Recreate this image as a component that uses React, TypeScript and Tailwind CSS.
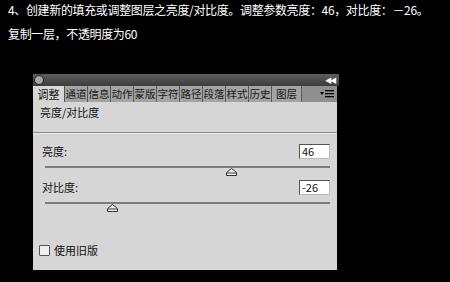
import React from "react";

const cjk = { fontFamily: '"Noto Sans CJK SC", "Noto Sans", sans-serif' };

const tabs = ["通道", "信息", "动作", "蒙版", "字符", "路径", "段落", "样式", "历史"];

function Thumb() {
  return (
    <svg width="11" height="8" viewBox="0 0 11 8" className="block">
      <path d="M5.5 0.5 L10.5 4.5 L10.5 7.5 L0.5 7.5 L0.5 4.5 Z" fill="#f4f4f4" stroke="#333" strokeWidth="1" />
      <line x1="1" y1="5" x2="10" y2="5" stroke="#333" strokeWidth="1" />
    </svg>
  );
}

function SliderRow({ label, value, thumbAt }: { label: string; value: string; thumbAt: number }) {
  return (
    <div className="flex flex-col">
      <div className="flex items-center justify-between h-[15px] pl-[9px] pr-[7px]">
        <span className="text-[11px] leading-none text-[#111]">{label}</span>
        <div className="w-[31px] h-[15px] bg-white border border-t-[#555] border-l-[#555] border-r-[#bbb] border-b-[#bbb] flex items-center pl-[2px] text-[11px] leading-none text-[#111]">
          {value}
        </div>
      </div>
      <div className="relative mt-[7px] ml-[12px] mr-[7px] h-[2px] bg-[#7c7c7c]">
        {/* thumb sits over the track */}
        <div className="absolute top-[2px]" style={{ left: thumbAt }}>
          <Thumb />
        </div>
      </div>
    </div>
  );
}

export default function App() {
  return (
    <div className="w-[450px] h-[282px] bg-black overflow-hidden flex flex-col" style={cjk}>
      {/* caption */}
      <div className="pt-[3px] pl-[8px] text-white text-[12px] leading-[14px] tracking-[-0.35px]">
        <p>4、创建新的填充或调整图层之亮度/对比度。调整参数亮度：46，对比度：－26。</p>
        <p className="mt-[10px]">复制一层，不透明度为60</p>
      </div>

      {/* panel */}
      <div className="ml-[33px] mt-[33px] w-[306px] flex flex-col">
        {/* title bar */}
        <div className="h-[12px] bg-gradient-to-b from-[#5e5e5e] to-[#3c3c3c] flex items-center justify-between px-[1px]">
          <div className="w-[10px] h-[10px] rounded-full bg-[#a5a5a5] border border-[#1e1e1e]" />
          <span className="text-white text-[7px] leading-none tracking-[-2px] pr-[3px]">◀◀</span>
        </div>

        {/* tab row */}
        <div className="h-[16px] bg-[#8f8f8f] flex items-stretch text-[11px] leading-none mr-[2px]">
          <div className="w-[32px] bg-[#d6d6d6] flex items-center justify-center text-[#111] border-r border-[#555]">调整</div>
          {tabs.map((t) => (
            <div key={t} className="w-[23px] bg-[#a3a3a3] border-r border-[#5a5a5a] flex items-center justify-center overflow-hidden whitespace-nowrap text-[#1a1a1a] text-[10.5px]">
              {t}
            </div>
          ))}
          <div className="w-[30px] bg-[#a3a3a3] border-r border-[#5a5a5a] flex items-center justify-center text-[#1a1a1a] text-[10.5px]">图层</div>
          <div className="flex-1 flex items-center justify-end pr-[3px]">
            <svg width="14" height="8" viewBox="0 0 14 8">
              <path d="M0 2 L4 2 L2 5 Z" fill="#000" />
              <rect x="5" y="0" width="9" height="1.3" fill="#000" />
              <rect x="5" y="3" width="9" height="1.3" fill="#000" />
              <rect x="5" y="6" width="9" height="1.3" fill="#000" />
            </svg>
          </div>
        </div>

        {/* body */}
        <div className="h-[168px] bg-[#d6d6d6] flex flex-col mr-[2px]">
          <div className="pl-[7px] pt-[5px] h-[30px] text-[11px] leading-none text-[#111]">亮度/对比度</div>
          <div className="h-[2px] border-t border-[#8a8a8a] bg-[#ececec]" />
          <div className="mt-[10px]">
            <SliderRow label="亮度:" value="46" thumbAt={181} />
          </div>
          <div className="mt-[12px]">
            <SliderRow label="对比度:" value="-26" thumbAt={62} />
          </div>
          <div className="mt-[41px] ml-[6px] flex items-center gap-[4px]">
            <div className="w-[11px] h-[11px] bg-[#eeeeee] border border-[#555] rounded-[1px]" />
            <span className="text-[11px] leading-none text-[#111]">使用旧版</span>
          </div>
        </div>
      </div>
    </div>
  );
}
